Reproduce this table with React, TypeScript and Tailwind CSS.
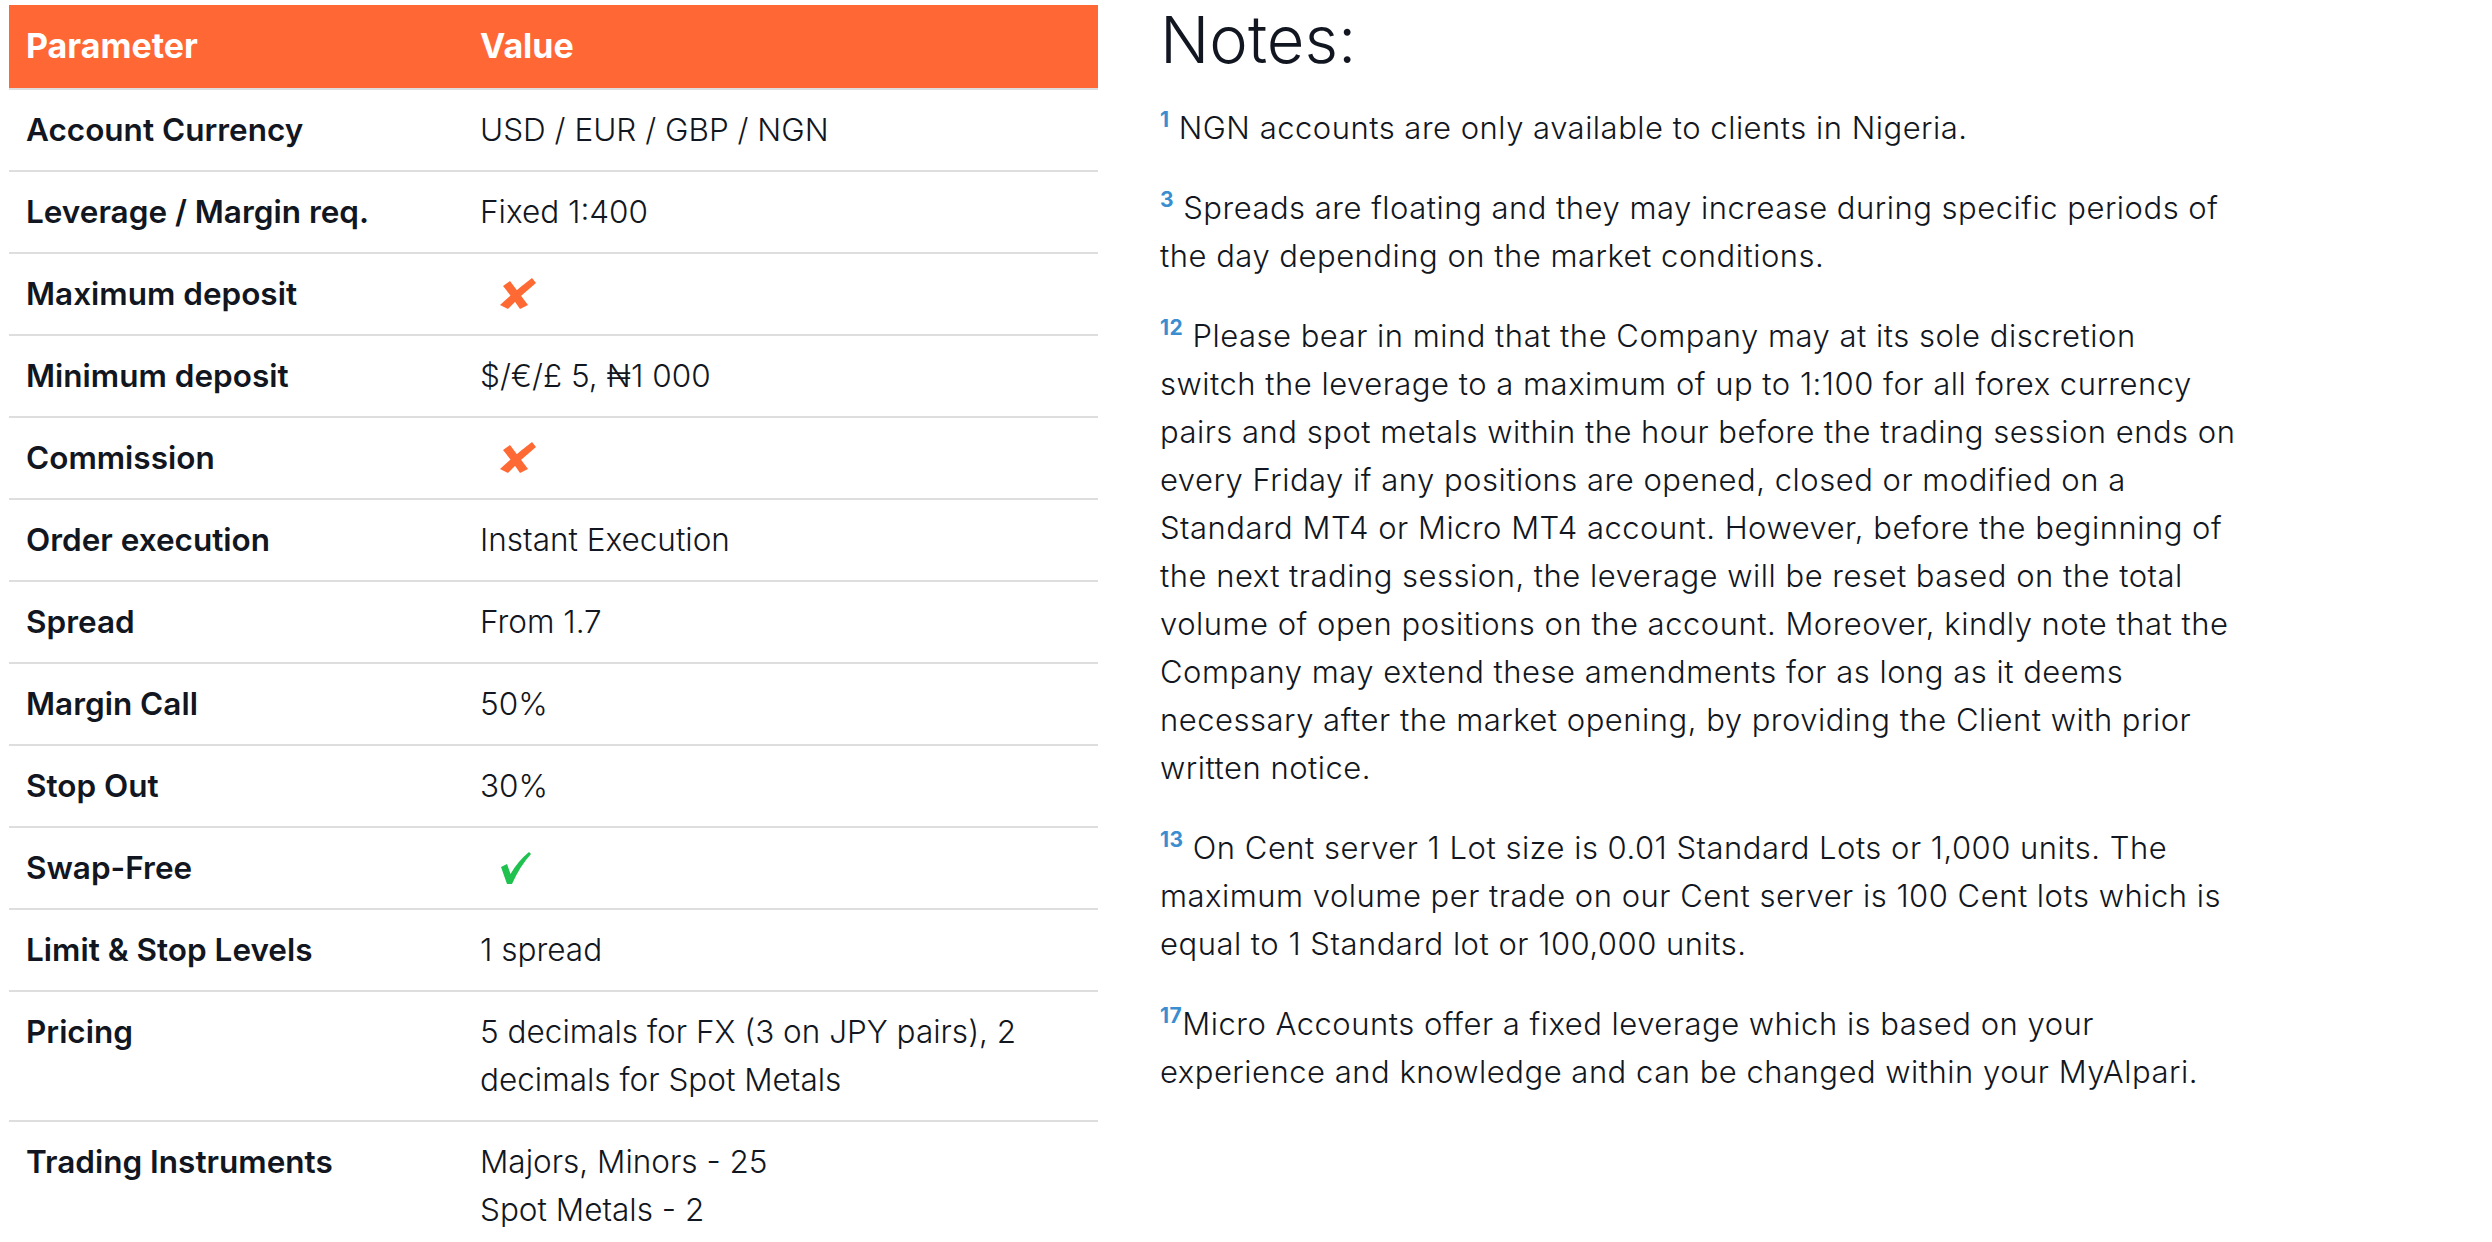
type Cell = string | string[] | 'no' | 'yes'

interface Row {
  label: string
  value: Cell
}

const rows: Row[] = [
  { label: 'Account Currency', value: 'USD / EUR / GBP / NGN' },
  { label: 'Leverage / Margin req.', value: 'Fixed 1:400' },
  { label: 'Maximum deposit', value: 'no' },
  { label: 'Minimum deposit', value: '$/€/£ 5, ₦1 000' },
  { label: 'Commission', value: 'no' },
  { label: 'Order execution', value: 'Instant Execution' },
  { label: 'Spread', value: 'From 1.7' },
  { label: 'Margin Call', value: '50%' },
  { label: 'Stop Out', value: '30%' },
  { label: 'Swap-Free', value: 'yes' },
  { label: 'Limit & Stop Levels', value: '1 spread' },
  { label: 'Pricing', value: '5 decimals for FX (3 on JPY pairs), 2 decimals for Spot Metals' },
  { label: 'Trading Instruments', value: ['Majors, Minors - 25', 'Spot Metals - 2'] },
]

function CrossMark() {
  return (
    <svg width="36" height="32" viewBox="0 0 36 32" className="ml-[20px]">
      <path d="M3 8 L10 3 Q19 15 28 27 L20 31 Q12 19 3 8 Z" fill="#ff6a34" />
      <path d="M0 27 Q16 12 32 0 L36 5 Q21 17 8 31 Z" fill="#ff6a34" />
    </svg>
  )
}

function CheckMark() {
  return (
    <svg width="30" height="32" viewBox="0 0 30 32" className="ml-[21px]">
      <path d="M0 15 L6 12 L9.5 22 Q17 9 28 0 L30 2 Q19 14 11 32 L6 32 Z" fill="#1fc14f" />
    </svg>
  )
}

function Value({ value }: { value: Cell }) {
  if (value === 'no') return <div className="flex h-12 items-center"><CrossMark /></div>
  if (value === 'yes') return <div className="flex h-12 items-center"><CheckMark /></div>
  if (Array.isArray(value)) {
    return (
      <div>
        {value.map((v) => (
          <div key={v}>{v}</div>
        ))}
      </div>
    )
  }
  return <div>{value}</div>
}

// lines broken where the original page breaks them
const notes: { n: string; space: boolean; lines: string[] }[] = [
  { n: '1', space: true, lines: ['NGN accounts are only available to clients in Nigeria.'] },
  {
    n: '3',
    space: true,
    lines: ['Spreads are floating and they may increase during specific periods of', 'the day depending on the market conditions.'],
  },
  {
    n: '12',
    space: true,
    lines: [
      'Please bear in mind that the Company may at its sole discretion',
      'switch the leverage to a maximum of up to 1:100 for all forex currency',
      'pairs and spot metals within the hour before the trading session ends on',
      'every Friday if any positions are opened, closed or modified on a',
      'Standard MT4 or Micro MT4 account. However, before the beginning of',
      'the next trading session, the leverage will be reset based on the total',
      'volume of open positions on the account. Moreover, kindly note that the',
      'Company may extend these amendments for as long as it deems',
      'necessary after the market opening, by providing the Client with prior',
      'written notice.',
    ],
  },
  {
    n: '13',
    space: true,
    lines: [
      'On Cent server 1 Lot size is 0.01 Standard Lots or 1,000 units. The',
      'maximum volume per trade on our Cent server is 100 Cent lots which is',
      'equal to 1 Standard lot or 100,000 units.',
    ],
  },
  {
    n: '17',
    space: false,
    lines: ['Micro Accounts offer a fixed leverage which is based on your', 'experience and knowledge and can be changed within your MyAlpari.'],
  },
]

export default function App() {
  return (
    <div className="flex min-h-screen gap-[62px] bg-white pl-[9px] font-['Inter',sans-serif] text-[#121620]">
      {/* table */}
      <div className="w-[1089px] shrink-0 pt-[5px]">
        <div className="grid grid-cols-[457px_1fr] border-b-2 border-[#dedede] bg-[#ff6734] pb-[18px] pt-[17px] text-[34px] font-bold leading-[48px] text-white">
          <div className="pl-[17px]">Parameter</div>
          <div className="pl-[14px]">Value</div>
        </div>
        {rows.map((row) => (
          <div
            key={row.label}
            className="grid grid-cols-[457px_1fr] border-b-2 border-[#dedede] py-4 text-[31.5px] leading-[48px]"
          >
            <div className="pl-[17px] font-semibold">{row.label}</div>
            <div className="pl-[14px] pr-4 font-[350]">
              <Value value={row.value} />
            </div>
          </div>
        ))}
      </div>

      {/* notes */}
      <div className="w-[1089px] shrink-0">
        <h2 className="text-[65px] font-light leading-[80px]">Notes:</h2>
        <div className="mt-[24px] flex flex-col gap-8 text-[31px] font-[350] leading-[48px] tracking-[0.5px]">
          {notes.map((note) => (
            <p key={note.n}>
              {note.lines.map((line, i) => (
                <span key={i} className="block whitespace-nowrap">
                  {i === 0 && (
                    <sup className="-top-[12px] text-[21px] font-bold leading-none text-[#3a8ed0]">{note.n}</sup>
                  )}
                  {i === 0 && note.space ? ' ' : ''}
                  {line}
                </span>
              ))}
            </p>
          ))}
        </div>
      </div>
    </div>
  )
}
